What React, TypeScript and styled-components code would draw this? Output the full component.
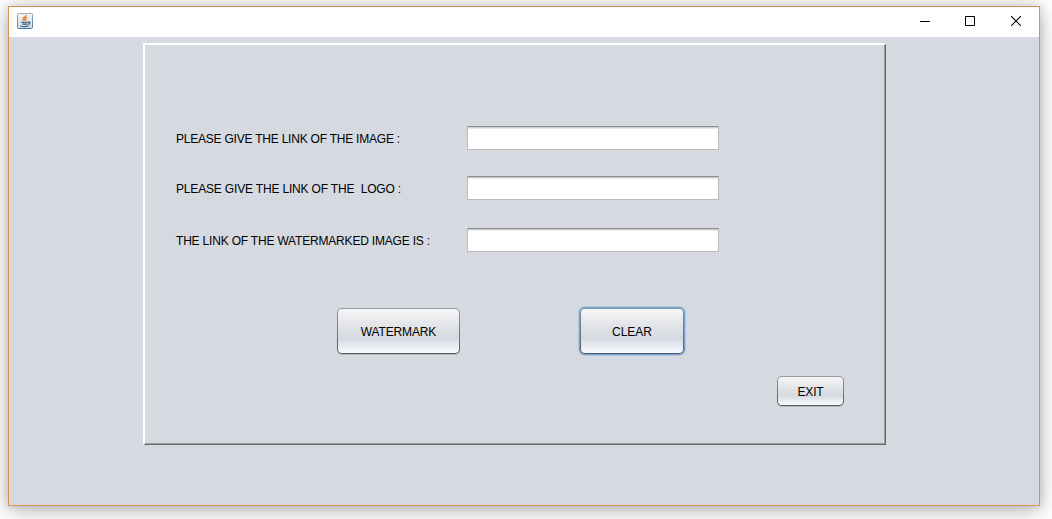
import React from 'react';
import styled, { createGlobalStyle } from 'styled-components';

const GlobalStyle = createGlobalStyle`
  * { box-sizing: border-box; }
  body { margin: 0; background: #fff; overflow: hidden; }
`;

const Desktop = styled.div`
  height: 519px;
  padding: 6px 12px 13px 8px;
  overflow: hidden;
  font: 12px/14px "Liberation Sans", Arial, sans-serif;
  color: #000;
`;

const Window = styled.main`
  height: 500px;
  border: 1px solid #d9914f;
  background: #d6d9e0;
  box-shadow: 0 4px 22px rgba(0, 0, 0, 0.27), 0 1px 9px rgba(0, 0, 0, 0.15);
`;

const TitleBar = styled.header`
  height: 30px;
  display: flex;
  align-items: center;
  justify-content: space-between;
  padding-left: 8px;
  background: #fff;
`;

const AppIcon = styled.svg`
  display: block;
  width: 16px;
  height: 16px;
  margin-top: -2px;
`;

const Controls = styled.div`
  display: flex;
`;

const ControlButton = styled.button`
  width: 46px;
  height: 30px;
  padding: 0;
  border: 0;
  background: none;
  &:first-child { width: 45px; }
  svg { display: block; margin: -2px auto 0; }
`;

const Panel = styled.section`
  width: 743px;
  height: 402px;
  margin: 6px 0 0 134px;
  padding: 81px 0 0 31px;
  border: 2px solid #fff;
  border-right: 1px solid #696969;
  border-bottom: 1px solid #696969;
  box-shadow: inset -1px -1px 0 #9a9a9f;
`;

const Fields = styled.div`
  display: grid;
  grid-template-columns: 291px 252px;
  grid-template-rows: 24px 24px 26px;
  row-gap: 26px;
`;

const Row = styled.label<{ $drop?: number }>`
  display: contents;
  & > * { margin-top: ${({ $drop }) => $drop ?? 0}px; }
`;

const Caption = styled.span<{ $spacing: number }>`
  height: 24px;
  line-height: 27px;
  white-space: pre;
  letter-spacing: ${({ $spacing }) => $spacing}px;
`;

const TextField = styled.input`
  width: 252px;
  height: 24px;
  padding: 2px 6px;
  border: 1px solid #bababa;
  border-top-color: #8d8e90;
  border-radius: 0;
  background: #fff;
  box-shadow: inset 0 1px 0 #cbcccb, inset 0 2px 0 #e9eae9;
  outline: none;
`;

const Actions = styled.div`
  display: flex;
  gap: 120px;
  margin: 56px 0 0 161px;
`;

const Footer = styled.div`
  display: flex;
  justify-content: flex-end;
  margin: 22px 41px 0 0;
`;

const PushButton = styled.button<{ $w: number; $h: number; $focused?: boolean }>`
  width: ${({ $w }) => $w}px;
  height: ${({ $h }) => $h}px;
  padding: 1px 0 0;
  border: 1px solid transparent;
  border-radius: 5px;
  font: inherit;
  letter-spacing: ${({ $focused }) => ($focused ? 0 : -0.15)}px;
  color: #000;
  background:
    linear-gradient(#f5f6f7 0%, #e5e7ea 32%, #dcdfe4 50%, #d6d9df 68%, #e7eaf0 83%, #fafbff 100%) padding-box,
    ${({ $focused }) =>
      $focused ? 'linear-gradient(#8199b0, #4a5a6c)' : 'linear-gradient(#989a9e, #55585d)'} border-box;
  box-shadow: ${({ $focused }) =>
    $focused ? '0 0 0 1px #73a4d1, 0 0 0 2px rgba(115, 164, 209, 0.35)' : '0 1px 0 rgba(120, 124, 132, 0.35)'};
`;

function JavaIcon() {
  return (
    <AppIcon viewBox="0 0 16 16">
      <defs>
        <linearGradient id="tile" x2="0" y2="1">
          <stop stopColor="#f4f6f7" />
          <stop offset="1" stopColor="#ced8e0" />
        </linearGradient>
        <linearGradient id="edge" x2="0" y2="1">
          <stop stopColor="#9eacb8" />
          <stop offset="1" stopColor="#527696" />
        </linearGradient>
      </defs>
      <rect x=".5" y=".5" width="15" height="15" rx="1" fill="url(#tile)" stroke="url(#edge)" />
      <path d="M8.9 2C9.3 4 6 4.3 6.3 6.1c.1.8.8 1.3 1.2 2M10.2 4.4C8.4 5 7.4 5.8 8.4 6.8c.4.5.2.9-.2 1.3" fill="none" stroke="#ed8128" strokeWidth="1.4" />
      <path d="M4.4 9.2c1.7.5 4.8.5 6.4-.1M5.2 11c1.4.4 3.6.4 5.1 0M3.4 13c2.5.7 6.2.6 8.2-.2M10.8 9.1c3.1-.6 2.5 1.9.2 2.3" fill="none" stroke="#41698e" strokeWidth="1.25" />
    </AppIcon>
  );
}

export default function App() {
  return (
    <>
      <GlobalStyle />
      <Desktop>
        <Window>
          <TitleBar>
            <JavaIcon />
            <Controls>
              <ControlButton aria-label="Minimize">
                <svg width="10" height="10"><path d="M0 5.5h10" stroke="#000" /></svg>
              </ControlButton>
              <ControlButton aria-label="Maximize">
                <svg width="10" height="10"><path d="M.5.5h9v9h-9z" fill="none" stroke="#000" /></svg>
              </ControlButton>
              <ControlButton aria-label="Close">
                <svg width="10" height="10"><path d="M0 0l10 10M10 0L0 10" stroke="#000" strokeWidth="1.1" /></svg>
              </ControlButton>
            </Controls>
          </TitleBar>
          <Panel>
            <Fields>
              <Row>
                <Caption $spacing={-0.22}>PLEASE GIVE THE LINK OF THE IMAGE :</Caption>
                <TextField />
              </Row>
              <Row>
                <Caption $spacing={-0.17}>{'PLEASE GIVE THE LINK OF THE  LOGO :'}</Caption>
                <TextField />
              </Row>
              <Row $drop={2}>
                <Caption $spacing={-0.19}>THE LINK OF THE WATERMARKED IMAGE IS :</Caption>
                <TextField />
              </Row>
            </Fields>
            <Actions>
              <PushButton $w={123} $h={46}>WATERMARK</PushButton>
              <PushButton $w={104} $h={46} $focused>CLEAR</PushButton>
            </Actions>
            <Footer>
              <PushButton $w={67} $h={30}>EXIT</PushButton>
            </Footer>
          </Panel>
        </Window>
      </Desktop>
    </>
  );
}
